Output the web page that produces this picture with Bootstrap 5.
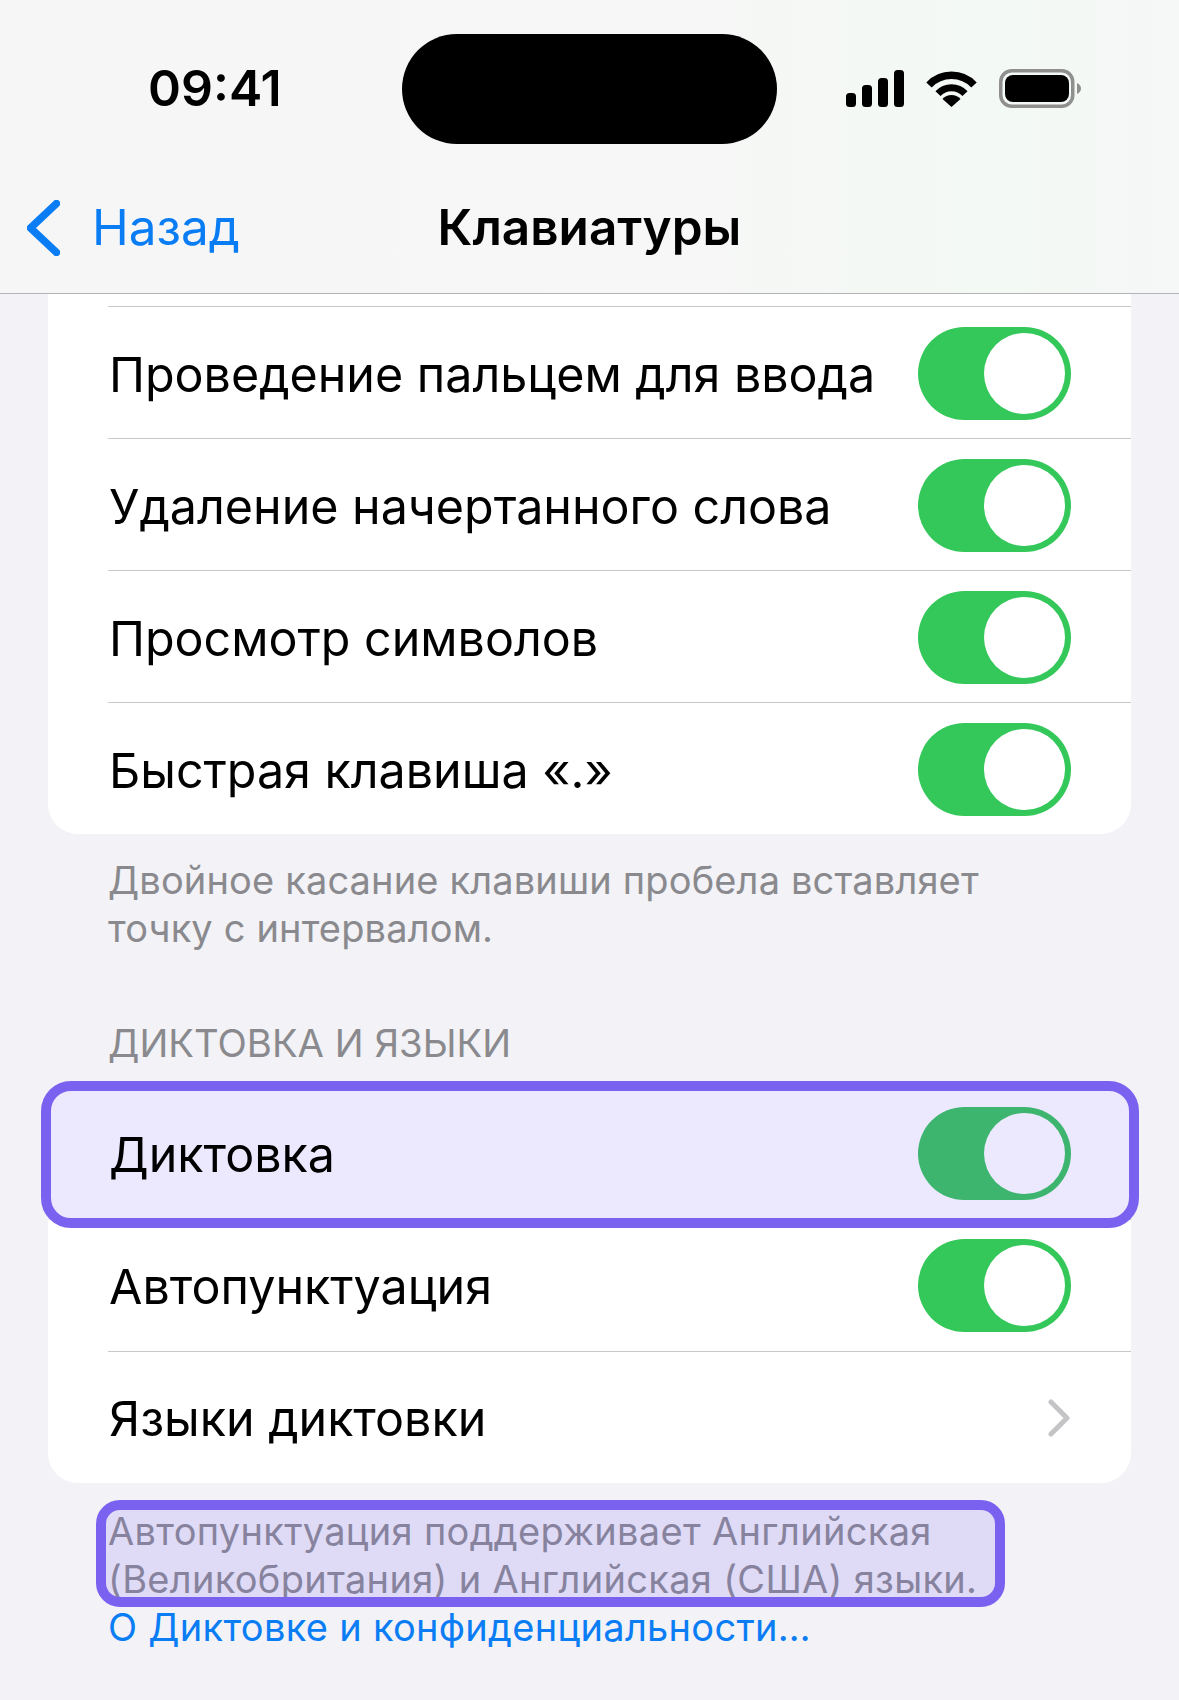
<!DOCTYPE html>
<html lang="ru">
<head>
    <meta charset="UTF-8">
    <meta name="viewport" content="width=device-width, initial-scale=1.0">
    <title>Клавиатуры</title>
    <link href="https://cdn.jsdelivr.net/npm/bootstrap@5.3.0/dist/css/bootstrap.min.css" rel="stylesheet">
    <style>
        html, body { height: 1700px; overflow: hidden; }
        body { background: #f2f2f7; font-family: Inter, "Noto Sans", sans-serif; color: #000; }
        .top-bar { height: 294px; border-bottom: 1px solid #b4b4b6; background: linear-gradient(90deg, #f6f6f6 0%, #f6f7f6 60%, #f3f9f4 85%, #f6f7f7 100%); }
        .status-row { height: 176px; padding-left: 148px; padding-right: 98px; }
        .clock { font-size: 50px; font-weight: 600; width: 254px; line-height: 1; }
        .island { width: 375px; height: 110px; background: #000; border-radius: 55px; margin-top: 2px; }
        .status-icons { margin-left: auto; gap: 22px; }
        .nav-row { height: 117px; padding-bottom: 14px; }
        .back-link { left: 27px; color: #0a7df5; font-size: 49.5px; gap: 32px; text-decoration: none; line-height: 1; }
        .screen-title { font-size: 49.5px; font-weight: 600; line-height: 1; }
        .group-box { margin: 0 48px; background: #fff; }
        .group-first { border-radius: 0 0 30px 30px; }
        .group-second { border-radius: 30px; }
        .group-stub { height: 13px; border-bottom: 1px solid #c8c8ca; margin-left: 60px; }
        .group-first .set-row { padding-top: 2px; }
        .set-row { height: 132px; margin-left: 60px; padding-right: 60px; border-bottom: 1px solid #c8c8ca; font-size: 48.4px; line-height: 1; }
        .set-row.row-end { height: 131px; border-bottom: 0; }
        .set-label { padding: 3px 0 0 1px; }
        .ios-toggle { width: 153px; height: 93px; border-radius: 47px; background: #34c759; padding: 6px; }
        .ios-knob { width: 81px; height: 81px; border-radius: 50%; background: #fff; }
        .row-flagged { background: #ece8fd; }
        .row-flagged .ios-toggle { background: #3db56f; }
        .row-flagged .ios-knob { background: #ece8fd; }
        .hl-frame { border: 10px solid #7b61f0; position: absolute; pointer-events: none; }
        .hl-row { left: -7px; right: -8px; top: -7px; bottom: -8px; border-radius: 30px; }
        .hl-note { left: -12px; right: 126px; top: -7px; bottom: 44px; border-radius: 24px; background: rgba(123, 97, 240, .16); }
        .note-text { margin: 0 48px 0 108px; font-size: 38px; line-height: 48px; color: #8a8a8e; letter-spacing: .15px; }
        .note-one { padding-top: 22px; height: 170px; }
        .section-cap { margin: 0 48px 0 108px; height: 84px; padding-top: 15px; font-size: 38.3px; line-height: 48px; color: #8a8a8e; }
        .note-two { padding-top: 24px; }
        .note-two .note-text { letter-spacing: .3px; }
        .note-link { color: #0a7df5; text-decoration: none; }
    </style>
</head>
<body>

    <div class="top-bar">
        <div class="status-row d-flex align-items-center">
            <div class="clock">09:41</div>
            <div class="island"></div>
            <div class="status-icons d-flex align-items-center">
                <svg width="58" height="37" viewBox="0 0 58 37">
                    <rect x="0" y="23" width="10" height="14" rx="3.5"/>
                    <rect x="16" y="15" width="10" height="22" rx="3.5"/>
                    <rect x="32" y="8" width="10" height="29" rx="3.5"/>
                    <rect x="48" y="0" width="10" height="37" rx="3.5"/>
                </svg>
                <svg width="51" height="37" viewBox="0 0 51 37">
                    <path d="M3 15 A31 31 0 0 1 48 15" fill="none" stroke="#000" stroke-width="7.5"/>
                    <path d="M12 23.7 A18.5 18.5 0 0 1 39 23.7" fill="none" stroke="#000" stroke-width="7"/>
                    <path d="M25.5 37 L16.5 29 A12 12 0 0 1 34.5 29 Z"/>
                </svg>
                <svg width="82" height="39" viewBox="0 0 82 39">
                    <rect x="1.75" y="1.75" width="72" height="35.5" rx="11" fill="none" stroke="#8f8f8f" stroke-width="3.5"/>
                    <rect x="6" y="6" width="64" height="27" rx="8"/>
                    <path d="M78 14 C80.5 15 82 17 82 19.5 C82 22 80.5 24 78 25 Z" fill="#8f8f8f"/>
                </svg>
            </div>
        </div>
        <div class="nav-row position-relative d-flex align-items-center justify-content-center">
            <a class="back-link position-absolute d-flex align-items-center" href="#">
                <svg width="33" height="56" viewBox="0 0 33 56"><path d="M29.5 3.5 L3.5 28 L29.5 52.5" fill="none" stroke="#0a7df5" stroke-width="7.5" stroke-linecap="round" stroke-linejoin="round"/></svg>
                <span>Назад</span>
            </a>
            <div class="screen-title">Клавиатуры</div>
        </div>
    </div>

    <div class="group-box group-first">
        <div class="group-stub"></div>
        <div class="set-row d-flex align-items-center justify-content-between">
            <span class="set-label">Проведение пальцем для ввода</span>
            <span class="ios-toggle d-flex justify-content-end"><span class="ios-knob"></span></span>
        </div>
        <div class="set-row d-flex align-items-center justify-content-between">
            <span class="set-label">Удаление начертанного слова</span>
            <span class="ios-toggle d-flex justify-content-end"><span class="ios-knob"></span></span>
        </div>
        <div class="set-row d-flex align-items-center justify-content-between">
            <span class="set-label">Просмотр символов</span>
            <span class="ios-toggle d-flex justify-content-end"><span class="ios-knob"></span></span>
        </div>
        <div class="set-row row-end d-flex align-items-center justify-content-between">
            <span class="set-label">Быстрая клавиша «.»</span>
            <span class="ios-toggle d-flex justify-content-end"><span class="ios-knob"></span></span>
        </div>
    </div>

    <div class="note-text note-one">Двойное касание клавиши пробела вставляет<br>точку с интервалом.</div>
    <div class="section-cap">ДИКТОВКА И ЯЗЫКИ</div>

    <div class="group-box group-second">
        <div class="position-relative row-flagged rounded-top-4">
            <div class="set-row d-flex align-items-center justify-content-between">
                <span class="set-label">Диктовка</span>
                <span class="ios-toggle d-flex justify-content-end"><span class="ios-knob"></span></span>
            </div>
            <div class="hl-frame hl-row"></div>
        </div>
        <div class="set-row d-flex align-items-center justify-content-between">
            <span class="set-label">Автопунктуация</span>
            <span class="ios-toggle d-flex justify-content-end"><span class="ios-knob"></span></span>
        </div>
        <div class="set-row row-end d-flex align-items-center justify-content-between">
            <span class="set-label">Языки диктовки</span>
            <svg class="me-0" width="24" height="38" viewBox="0 0 24 38"><path d="M4 3 L20 19 L4 35" fill="none" stroke="#c4c4c7" stroke-width="5" stroke-linecap="round" stroke-linejoin="round"/></svg>
        </div>
    </div>

    <div class="note-two">
        <div class="note-text position-relative">
            Автопунктуация поддерживает Английская<br>(Великобритания) и Английская (США) языки.<br>
            <a class="note-link" href="#">О Диктовке и конфиденциальности…</a>
            <div class="hl-frame hl-note"></div>
        </div>
    </div>

    <script src="https://cdn.jsdelivr.net/npm/bootstrap@5.3.0/dist/js/bootstrap.bundle.min.js"></script>
</body>
</html>
